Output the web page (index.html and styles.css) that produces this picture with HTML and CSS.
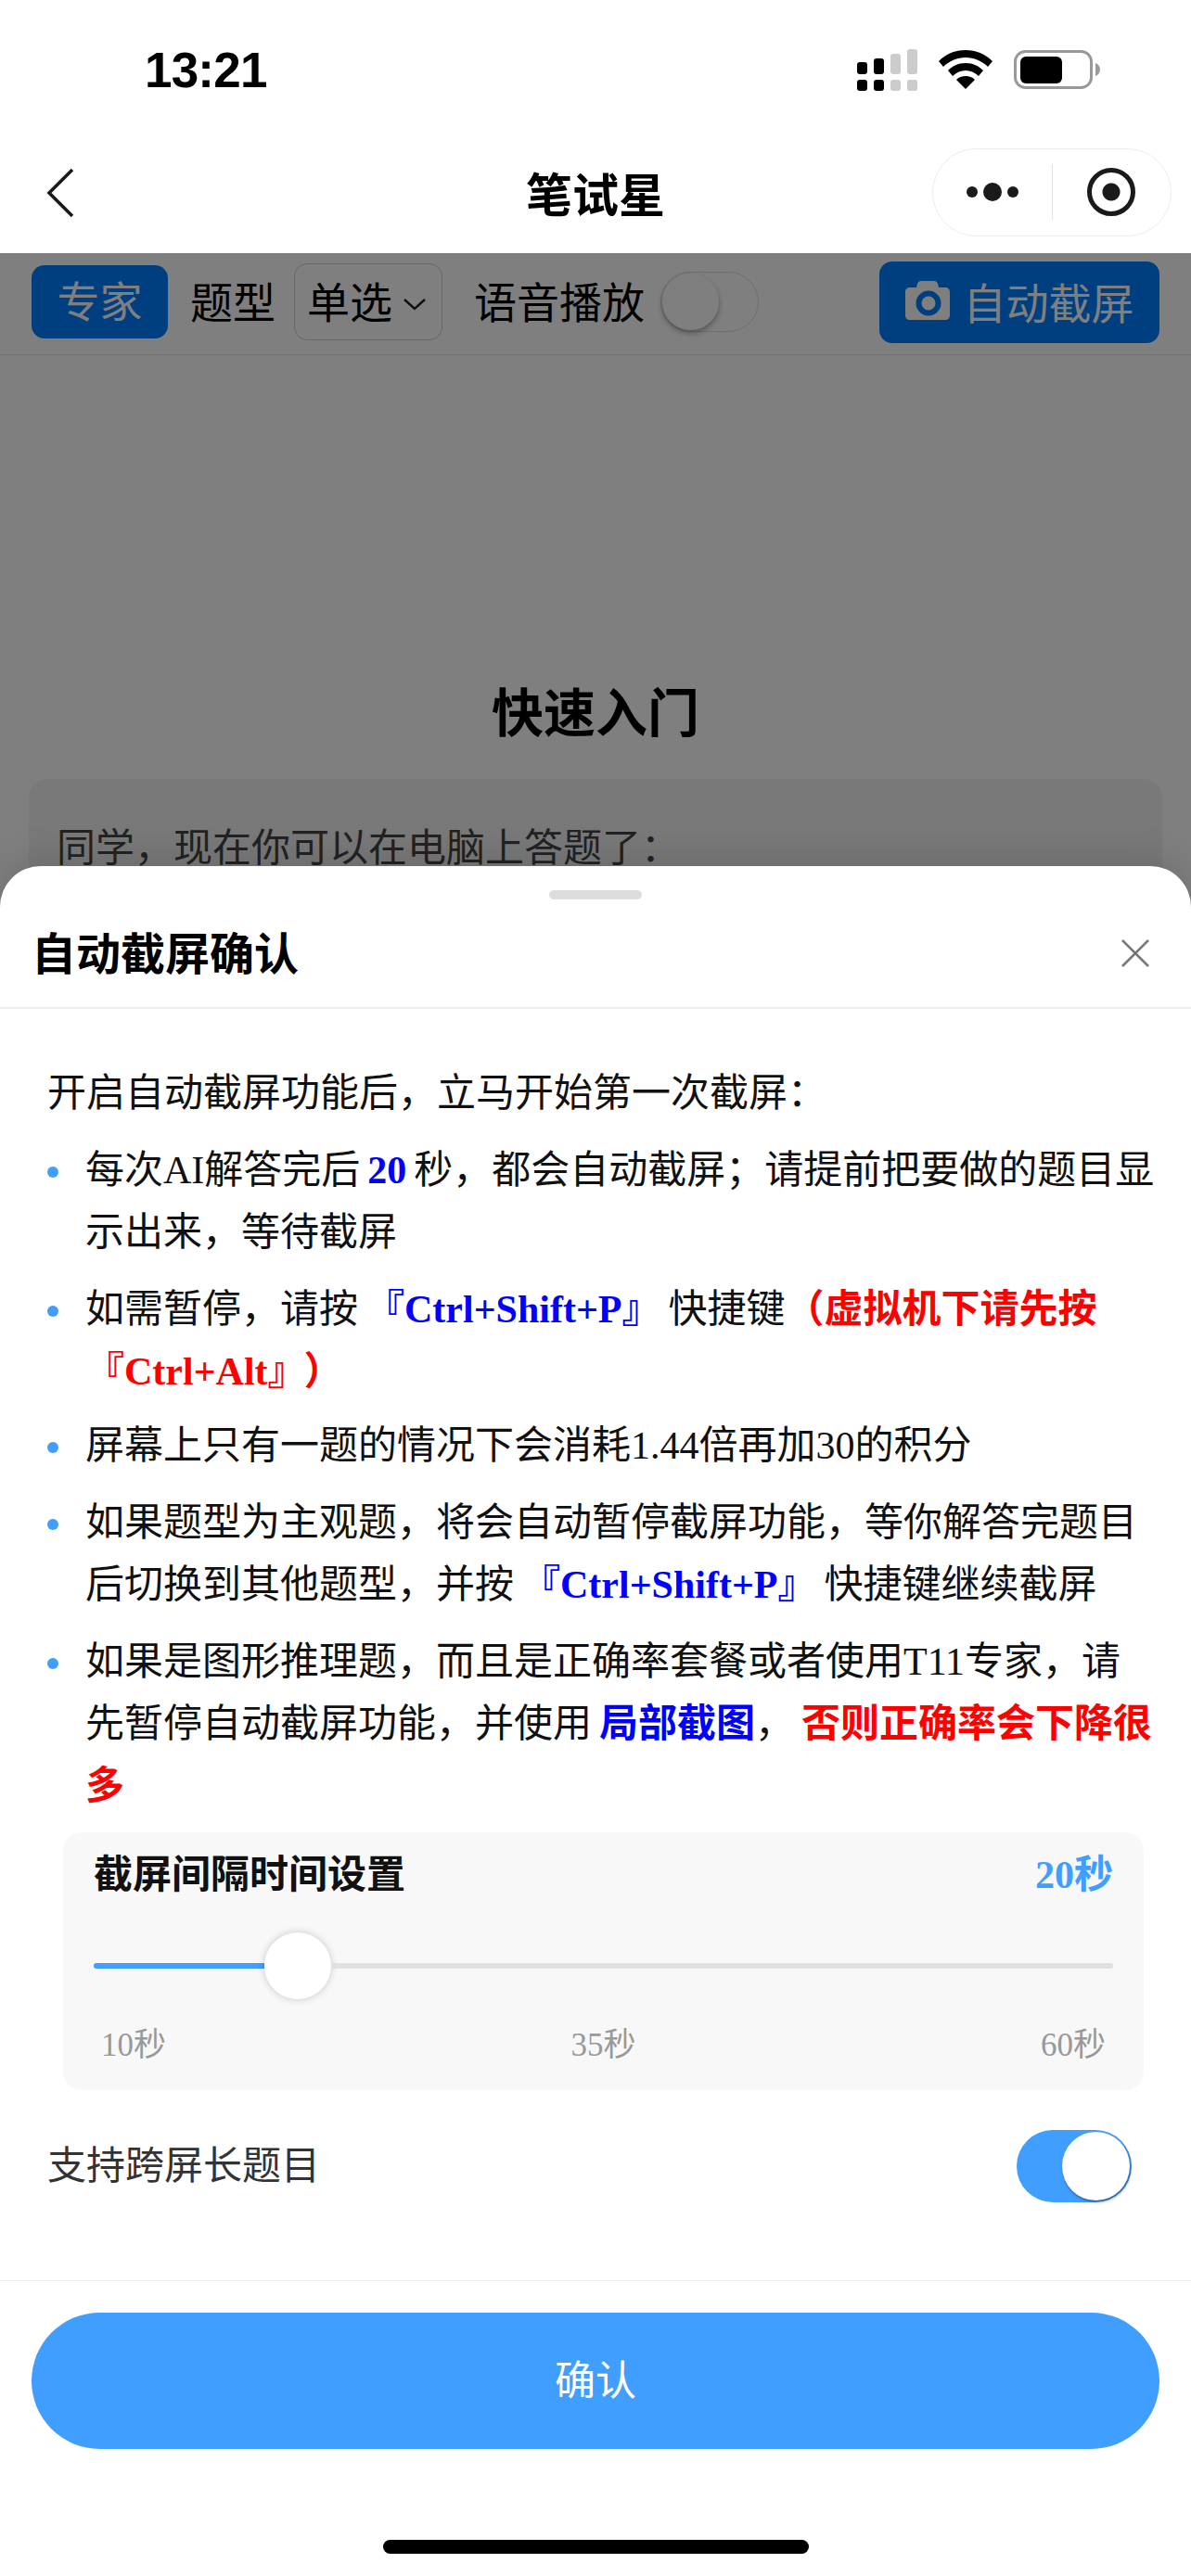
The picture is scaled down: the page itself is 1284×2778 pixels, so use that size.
FILE: index.html
```html
<!DOCTYPE html>
<html lang="zh-CN">
<head>
    <meta charset="UTF-8">
    <meta name="viewport" content="width=device-width, initial-scale=1.0">
    <title>笔试星</title>
    <link rel="stylesheet" href="styles.css">
</head>
<body>
    <div class="status-bar">
        <span class="time">13:21</span>
        <div class="status-icons">
            <svg class="signal" width="65" height="45" viewBox="0 0 65 45">
                <g fill="#000">
                    <rect x="0" y="14" width="11" height="13" rx="3"/>
                    <rect x="18" y="10" width="11" height="17" rx="3"/>
                    <rect x="0" y="33" width="11" height="12" rx="3"/>
                    <rect x="18" y="33" width="11" height="12" rx="3"/>
                </g>
                <g fill="#ccc">
                    <rect x="36" y="5" width="11" height="22" rx="3"/>
                    <rect x="54" y="0" width="11" height="27" rx="3"/>
                    <rect x="36" y="33" width="11" height="12" rx="3"/>
                    <rect x="54" y="33" width="11" height="12" rx="3"/>
                </g>
            </svg>
            <svg class="wifi" width="58" height="42" viewBox="0 0 58 42">
                <path fill="#000" d="M29 0C18 0 8 4 0 12l5 6c6-6 15-10 24-10s18 4 24 10l5-6C50 4 40 0 29 0z"/>
                <path fill="#000" d="M29 14c-8 0-14 3-19 8l5 6c4-4 9-6 14-6s10 2 14 6l5-6c-5-5-11-8-19-8z"/>
                <path fill="#000" d="M29 28c-4 0-7 1-10 4l10 10 10-10c-3-3-6-4-10-4z"/>
            </svg>
            <svg class="battery" width="94" height="42" viewBox="0 0 94 42">
                <rect x="1.5" y="1.5" width="82" height="39" rx="11" fill="none" stroke="#999" stroke-width="3"/>
                <rect x="7" y="7" width="45" height="29" rx="6" fill="#000"/>
                <path fill="#999" d="M88 14c3 1 5 4 5 7s-2 6-5 7z"/>
            </svg>
        </div>
    </div>

    <div class="nav-bar">
        <svg class="back" width="32" height="54" viewBox="0 0 32 54">
            <path d="M29 2 4 27l25 25" fill="none" stroke="#1a1a1a" stroke-width="3.6"/>
        </svg>
        <div class="nav-title">笔试星</div>
        <div class="capsule">
            <div class="capsule-part">
                <span class="dot"></span><span class="dot dot-big"></span><span class="dot"></span>
            </div>
            <div class="capsule-line"></div>
            <div class="capsule-part">
                <span class="target"></span>
            </div>
        </div>
    </div>

    <div class="toolbar">
        <div class="expert-btn">专家</div>
        <span class="tool-label">题型</span>
        <div class="type-select">单选
            <svg width="26" height="14" viewBox="0 0 26 14"><path d="M2 2l11 10L24 2" fill="none" stroke="#1a1a1a" stroke-width="2.4"/></svg>
        </div>
        <span class="tool-label voice-label">语音播放</span>
        <div class="voice-toggle"><span class="voice-knob"></span></div>
        <div class="capture-btn">
            <svg width="48" height="42" viewBox="0 0 48 42">
                <path fill="#fff" fill-rule="evenodd" d="M17 0h14c2 0 3 1 4 3l1 4h7c3 0 5 2 5 5v25c0 3-2 5-5 5H5c-3 0-5-2-5-5V12c0-3 2-5 5-5h7l1-4c1-2 2-3 4-3zM25 10.500a13.500 13.500 0 1 0 0 27 13.500 13.500 0 0 0 0-27zm0 6a7.500 7.500 0 1 1 0 15 7.500 7.500 0 0 1 0-15z"/>
            </svg>
            自动截屏
        </div>
    </div>

    <h1 class="page-heading">快速入门</h1>
    <div class="guide-card">同学&#xFF0C;现在你可以在电脑上答题了&#xFF1A;</div>

    <div class="mask"></div>

    <div class="sheet">
        <div class="handle"></div>
        <div class="sheet-head">
            <span class="sheet-title">自动截屏确认</span>
            <svg class="close" width="32" height="32" viewBox="0 0 32 32">
                <path d="M2 2l28 28M30 2 2 30" fill="none" stroke="#777" stroke-width="2.6"/>
            </svg>
        </div>
        <div class="sheet-body">
            <p class="intro">开启自动截屏功能后&#xFF0C;立马开始第一次截屏&#xFF1A;</p>
            <ul class="rules">
                <li>每次AI解答完后 <b class="blue">20</b> 秒&#xFF0C;都会自动截屏&#xFF1B;请提前把要做的题目显示出来&#xFF0C;等待截屏</li>
                <li>如需暂停&#xFF0C;请按 <b class="blue">『Ctrl+Shift+P』</b> 快捷键<b class="red">&#xFF08;虚拟机下请先按『Ctrl+Alt』<span class="paren-end">&#xFF09;</span></b></li>
                <li class="rule-tight">屏幕上只有一题的情况下会消耗1.44倍再加30的积分</li>
                <li>如果题型为主观题&#xFF0C;将会自动暂停截屏功能&#xFF0C;等你解答完题目后切换到其他题型&#xFF0C;并按 <b class="blue">『Ctrl+Shift+P』</b> 快捷键继续截屏</li>
                <li>如果是图形推理题&#xFF0C;而且是正确率套餐或者使用T11专家&#xFF0C;请先暂停自动截屏功能&#xFF0C;并使用 <b class="blue">局部截图</b>&#xFF0C; <b class="red">否则正确率会下降很多</b></li>
            </ul>
            <div class="interval-box">
                <div class="interval-head">
                    <span class="interval-title">截屏间隔时间设置</span>
                    <span class="interval-value">20秒</span>
                </div>
                <div class="slider">
                    <div class="slider-fill"></div>
                    <div class="slider-knob"></div>
                    <div class="slider-rest"></div>
                </div>
                <div class="slider-marks">
                    <span>10秒</span><span>35秒</span><span>60秒</span>
                </div>
            </div>
            <div class="long-row">
                <span>支持跨屏长题目</span>
                <div class="switch"><span class="switch-knob"></span></div>
            </div>
        </div>
        <div class="sheet-foot">
            <div class="confirm-btn">确认</div>
        </div>
        <div class="home-bar"></div>
    </div>
</body>
</html>
```

FILE: styles.css
```css
* {
    box-sizing: border-box;
}
html, body {
    margin: 0;
    padding: 0;
}
body {
    position: relative;
    width: 1284px;
    height: 2778px;
    overflow: hidden;
    background: #fff;
    color: #000;
    font-family: "Liberation Serif", "Noto Sans CJK SC", serif;
}

.status-bar {
    height: 152px;
    padding: 40px 97px 0 156px;
    display: flex;
    justify-content: space-between;
    align-items: flex-start;
}
.time {
    font-family: "Liberation Sans", sans-serif;
    font-size: 53px;
    font-weight: 700;
    line-height: 72px;
    letter-spacing: -0.8px;
}
.status-icons {
    display: flex;
    align-items: flex-start;
    gap: 23px;
    padding-top: 13px;
}
.wifi, .battery {
    margin-top: 1px;
}

.nav-bar {
    height: 121px;
    padding: 0 21px 0 49px;
    display: flex;
    align-items: center;
    position: relative;
}
.back {
    margin-bottom: 10px;
}
.nav-title {
    position: absolute;
    left: 0;
    right: 0;
    top: 23px;
    text-align: center;
    font-family: "Noto Sans CJK SC", sans-serif;
    font-size: 50px;
    font-weight: 700;
    line-height: 64px;
}
.capsule {
    margin-left: auto;
    margin-bottom: 11px;
    width: 258px;
    height: 95px;
    border: 1px solid #ececec;
    border-radius: 48px;
    display: flex;
    align-items: center;
    background: #fff;
}
.capsule-part {
    flex: 1;
    display: flex;
    align-items: center;
    justify-content: center;
    gap: 6px;
}
.capsule-line {
    width: 1px;
    height: 60px;
    background: #e4e4e4;
}
.dot {
    width: 12px;
    height: 12px;
    border-radius: 50%;
    background: #1a1a1a;
}
.dot-big {
    width: 20px;
    height: 20px;
}
.target {
    width: 52px;
    height: 52px;
    border: 5px solid #1a1a1a;
    border-radius: 50%;
    display: block;
    background: radial-gradient(circle, #1a1a1a 0 9px, #fff 10px);
}

.toolbar {
    height: 110px;
    padding: 0 34px 4px;
    display: flex;
    align-items: center;
    border-bottom: 1px solid #e6e6e6;
    font-family: "Noto Sans CJK SC", sans-serif;
}
.expert-btn {
    width: 147px;
    height: 79px;
    border-radius: 14px;
    background: #007fff;
    color: #fff;
    font-size: 46px;
    line-height: 72px;
    text-align: center;
}
.tool-label {
    font-size: 46px;
    margin-left: 24px;
    margin-bottom: 5px;
}
.type-select {
    width: 160px;
    height: 83px;
    margin-left: 20px;
    border: 1px solid #ccc;
    border-radius: 14px;
    font-size: 46px;
    padding: 0 0 5px 13px;
    display: flex;
    align-items: center;
    gap: 11px;
}
.type-select svg {
    margin-top: 9px;
}
.voice-label {
    margin-left: 34px;
}
.voice-toggle {
    width: 106px;
    height: 65px;
    margin-left: 17px;
    border: 1px solid #ddd;
    border-radius: 33px;
    padding: 1px;
    background: #fff;
}
.voice-knob {
    display: block;
    width: 61px;
    height: 61px;
    border-radius: 50%;
    background: #fff;
    box-shadow: 0 3px 6px rgba(0, 0, 0, 0.35);
}
.capture-btn {
    margin-left: auto;
    width: 302px;
    height: 88px;
    padding-bottom: 4px;
    border-radius: 14px;
    background: #007fff;
    color: #fff;
    font-size: 46px;
    display: flex;
    align-items: center;
    justify-content: center;
    gap: 15px;
}

.page-heading {
    margin: 345px 0 0;
    text-align: center;
    font-family: "Noto Sans CJK SC", sans-serif;
    font-size: 56px;
    font-weight: 700;
    line-height: 74px;
}
.guide-card {
    margin: 38px 31px 0;
    height: 400px;
    padding: 41px 30px;
    border-radius: 20px;
    background: #f2f2f2;
    font-family: "Noto Sans CJK SC", sans-serif;
    font-size: 42px;
    line-height: 60px;
    color: #444;
}

.mask {
    position: absolute;
    left: 0;
    right: 0;
    top: 273px;
    bottom: 0;
    background: rgba(0, 0, 0, 0.5);
}

.sheet {
    position: absolute;
    left: 0;
    right: 0;
    top: 934px;
    bottom: 0;
    background: #fff;
    border-radius: 44px 44px 0 0;
    box-shadow: 0 -8px 40px rgba(0, 0, 0, 0.12);
}
.handle {
    width: 100px;
    height: 10px;
    margin: 26px auto 0;
    border-radius: 5px;
    background: #ddd;
}
.sheet-head {
    height: 118px;
    padding: 0 44px 0 34px;
    display: flex;
    align-items: center;
    justify-content: space-between;
    border-bottom: 2px solid #efefef;
}
.sheet-title {
    font-family: "Noto Sans CJK SC", sans-serif;
    font-size: 48px;
    font-weight: 700;
    margin-bottom: 6px;
}
.sheet-body {
    height: 1371px;
    padding: 58px 39px 0 51px;
    font-size: 42px;
    line-height: 67px;
    color: #111;
}
.intro {
    margin: 0;
}
.rules {
    margin: 0;
    padding: 0 0 0 41px;
    list-style: none;
    word-spacing: -2.5px;
}
.rules li {
    position: relative;
    margin-top: 16px;
}
.rules li.rule-tight {
    margin-top: 13px;
}
.rules li::before {
    content: "";
    position: absolute;
    left: -41px;
    top: 29px;
    width: 12px;
    height: 12px;
    border-radius: 50%;
    background: #409eff;
}
.blue {
    color: #0000ff;
}
.red {
    color: #ff0000;
}
.paren-end {
    margin-left: 18px;
}
.interval-box {
    margin: 16px 0 0 17px;
    width: 1165px;
    height: 278px;
    padding: 18px 33px 0;
    border-radius: 20px;
    background: #f8f8f8;
}
.interval-head {
    display: flex;
    justify-content: space-between;
    font-weight: 700;
    font-size: 42px;
    line-height: 56px;
    color: #111;
}
.interval-value {
    color: #409eff;
}
.slider {
    margin-top: 34px;
    height: 72px;
    display: flex;
    align-items: center;
}
.slider-fill {
    width: 184px;
    height: 6px;
    border-radius: 3px 0 0 3px;
    background: #409eff;
}
.slider-knob {
    flex: none;
    width: 72px;
    height: 72px;
    border-radius: 50%;
    background: #fff;
    box-shadow: 0 0 8px rgba(0, 0, 0, 0.2);
}
.slider-rest {
    flex: 1;
    height: 6px;
    border-radius: 0 3px 3px 0;
    background: #e0e0e0;
}
.slider-marks {
    margin-top: 25px;
    padding: 0 8px;
    display: flex;
    justify-content: space-between;
    font-size: 35px;
    line-height: 50px;
    color: #999;
}
.long-row {
    margin-top: 43px;
    padding-right: 25px;
    display: flex;
    align-items: center;
    justify-content: space-between;
    color: #333;
}
.switch {
    width: 124px;
    height: 78px;
    border-radius: 39px;
    background: #409eff;
    padding: 2px;
    display: flex;
    justify-content: flex-end;
}
.switch-knob {
    width: 73px;
    height: 74px;
    border-radius: 50%;
    background: #fff;
    box-shadow: 1px 2px 3px rgba(0, 0, 0, 0.4);
}
.sheet-foot {
    height: 180px;
    padding: 34px 34px 0;
    border-top: 1px solid #efefef;
}
.confirm-btn {
    height: 147px;
    border-radius: 74px;
    background: #409eff;
    color: #fff;
    font-family: "Noto Sans CJK SC", sans-serif;
    font-size: 44px;
    line-height: 140px;
    text-align: center;
}
.home-bar {
    position: absolute;
    left: 413px;
    bottom: 24px;
    width: 459px;
    height: 15px;
    border-radius: 8px;
    background: #000;
}
```
